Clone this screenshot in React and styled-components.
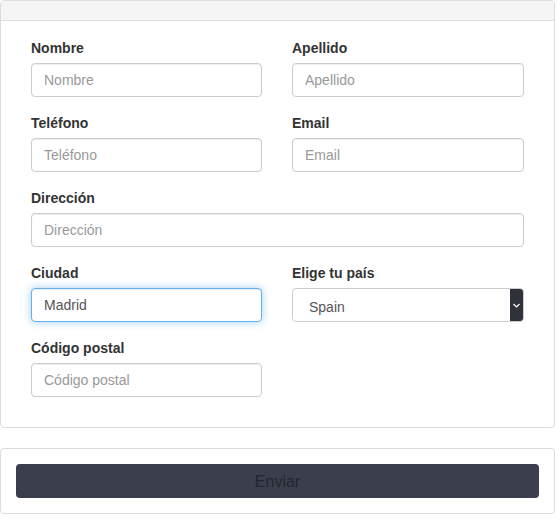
import React from 'react';
import styled, { createGlobalStyle, css } from 'styled-components';

const GlobalStyle = createGlobalStyle`
  body {
    margin: 0;
    background: #fff;
    font-family: "Liberation Sans", Arial, sans-serif;
    font-size: 14px;
    color: #333;
  }
  * { box-sizing: border-box; }
`

const Page = styled.div`
  width: 555px;
`

const Panel = styled.div`
  border: 1px solid #ddd;
  border-radius: 4px;
  background: #fff;
  margin-bottom: 20px;
  overflow: hidden;
`

const PanelHeading = styled.div`
  height: 20px;
  background: #f5f5f5;
  border-bottom: 1px solid #ddd;
`

const FormBody = styled.div`
  display: grid;
  grid-template-columns: 231px 232px;
  column-gap: 30px;
  row-gap: 16px;
  padding: 17px 30px 30px 30px;
`

const PlainBody = styled.div`
  padding: 15px;
`

const Field = styled.div`
  display: flex;
  flex-direction: column;
  ${({wide}) => wide && css`grid-column: 1 / span 2;`}
`

const Label = styled.label`
  font-weight: bold;
  line-height: 20px;
  margin-bottom: 5px;
  color: #333;
`

const Input = styled.input`
  height: 34px;
  padding: 6px 12px;
  font-family: inherit;
  font-size: 14px;
  color: #555;
  border: 1px solid #ccc;
  border-radius: 4px;
  box-shadow: inset 0 1px 1px rgba(0,0,0,.075);
  outline: none;
  &::placeholder { color: #999; }
  ${({focused}) => focused && css`
    border-color: #66afe9;
    box-shadow: inset 0 1px 1px rgba(0,0,0,.075), 0 0 8px rgba(102,175,233,.6);
  `}
`

const Select = styled.div`
  height: 34px;
  display: flex;
  border: 1px solid #ccc;
  border-radius: 4px;
  overflow: hidden;
  background: #fff;
`

const SelectValue = styled.div`
  flex: 1;
  padding: 8px 16px 0;
  color: #555;
  line-height: 20px;
`

const SelectArrow = styled.div`
  width: 13px;
  background: #2f313b;
  display: flex;
  align-items: center;
  justify-content: center;
`

const Button = styled.button`
  display: block;
  width: 100%;
  height: 34px;
  padding: 2px 0 0;
  border: none;
  border-radius: 4px;
  background: #3b3e4c;
  color: #24262f;
  font-family: inherit;
  font-size: 16px;
  line-height: 20px;
`

const fields = [
  { name: 'Nombre' },
  { name: 'Apellido' },
  { name: 'Teléfono' },
  { name: 'Email' },
  { name: 'Dirección', wide: true },
]

export default function App() {
  return (
    <Page>
      <GlobalStyle />
      <Panel>
        <PanelHeading />
        <FormBody>
          {fields.map((f) => (
            <Field key={f.name} wide={f.wide}>
              <Label>{f.name}</Label>
              <Input placeholder={f.name} readOnly />
            </Field>
          ))}
          <Field>
            <Label>Ciudad</Label>
            <Input focused defaultValue="Madrid" readOnly />
          </Field>
          <Field>
            <Label>Elige tu país</Label>
            <Select>
              <SelectValue>Spain</SelectValue>
              <SelectArrow>
                <svg width="7" height="5" viewBox="0 0 7 5">
                  <path d="M0.5 1 L3.5 4 L6.5 1" fill="none" stroke="#fff" strokeWidth="1.2" />
                </svg>
              </SelectArrow>
            </Select>
          </Field>
          <Field>
            <Label>Código postal</Label>
            <Input placeholder="Código postal" readOnly />
          </Field>
        </FormBody>
      </Panel>
      <Panel>
        <PlainBody>
          <Button>Enviar</Button>
        </PlainBody>
      </Panel>
    </Page>
  );
}
